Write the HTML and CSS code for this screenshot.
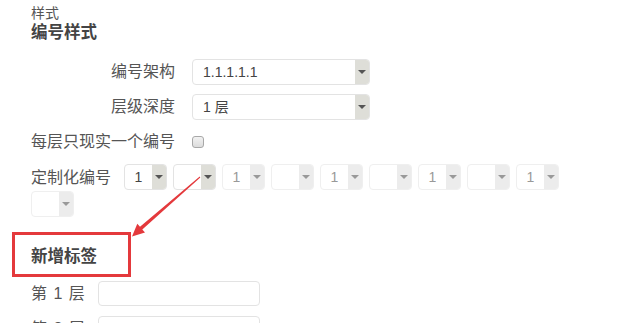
FILE: index.html
```html
<!DOCTYPE html>
<html lang="zh">
<head>
<meta charset="utf-8">
<link rel="stylesheet" href="styles.css">
</head>
<body>
<div class="page">
  <div class="crumb">样式</div>
  <h2 class="title">编号样式</h2>

  <div class="form">
    <label class="lbl">编号架构</label>
    <div class="sel wide"><span class="val">1.1.1.1.1</span><span class="btn"><i class="caret"></i></span></div>

    <label class="lbl">层级深度</label>
    <div class="sel wide"><span class="val">1 层</span><span class="btn"><i class="caret"></i></span></div>

    <label class="lbl left">每层只现实一个编号</label>
    <div class="cbwrap"><input type="checkbox" class="cb"></div>
  </div>

  <div class="custom">
    <span class="clabel">定制化编号</span>
    <div class="sel small"><span class="val c">1</span><span class="btn"><i class="caret"></i></span></div>
    <div class="sel small"><span class="val c"></span><span class="btn"><i class="caret"></i></span></div>
    <div class="sel small off"><span class="val c">1</span><span class="btn"><i class="caret"></i></span></div>
    <div class="sel small off"><span class="val c"></span><span class="btn"><i class="caret"></i></span></div>
    <div class="sel small off"><span class="val c">1</span><span class="btn"><i class="caret"></i></span></div>
    <div class="sel small off"><span class="val c"></span><span class="btn"><i class="caret"></i></span></div>
    <div class="sel small off"><span class="val c">1</span><span class="btn"><i class="caret"></i></span></div>
    <div class="sel small off"><span class="val c"></span><span class="btn"><i class="caret"></i></span></div>
    <div class="sel small off"><span class="val c">1</span><span class="btn"><i class="caret"></i></span></div>
    <div class="sel small off"><span class="val c"></span><span class="btn"><i class="caret"></i></span></div>
  </div>

  <h2 class="title tags">新增标签</h2>

  <div class="layers">
    <label class="llbl">第 1 层</label><input class="txt" type="text">
    <label class="llbl">第 2 层</label><input class="txt" type="text">
  </div>
</div>

<svg class="annot" width="627" height="323" viewBox="0 0 627 323">
  <rect x="13.5" y="233.5" width="116" height="42" fill="none" stroke="#e4393c" stroke-width="3"/>
  <polygon fill="#e4393c" points="200.3,177.4 142.3,229.4 145,232.5 132,236.5 137.3,223.8 140,226.8 199.7,176.6"/>
</svg>
</body>
</html>
```

FILE: styles.css
```css
html, body {
  margin: 0;
  padding: 0;
  background: #ffffff;
}
body {
  font-family: "Liberation Sans", "Noto Sans CJK SC", sans-serif;
  color: #555;
  width: 627px;
  height: 323px;
  overflow: hidden;
  position: relative;
}
.page {
  padding: 4px 0 0 31px;
}
.crumb {
  font-size: 14px;
  line-height: 18px;
  color: #555;
}
.title {
  margin: 0;
  font-size: 16.5px;
  line-height: 20px;
  font-weight: bold;
  color: #444;
}
.form {
  margin-top: 17px;
  display: grid;
  grid-template-columns: 144px 178px;
  column-gap: 17px;
  row-gap: 9px;
  align-items: center;
}
.lbl {
  font-size: 16px;
  line-height: 26px;
  text-align: right;
  color: #555;
  white-space: nowrap;
}
.lbl.left {
  text-align: left;
}
.sel {
  display: flex;
  height: 26px;
  box-sizing: border-box;
  border: 1px solid #e3e3e3;
  border-radius: 4px;
  background: #fff;
  overflow: hidden;
}
.sel .val {
  flex: 1;
  font-size: 14px;
  line-height: 24px;
  color: #444;
  padding-left: 10px;
  white-space: nowrap;
}
.sel .val.c {
  padding-left: 0;
  text-align: center;
}
.sel .btn {
  width: 14px;
  background: #deded8;
  display: flex;
  align-items: center;
  justify-content: center;
}
.caret {
  display: block;
  width: 0;
  height: 0;
  border-left: 4px solid transparent;
  border-right: 4px solid transparent;
  border-top: 4px solid #555;
}
.sel.small {
  width: 43px;
  margin-right: 6px;
  margin-bottom: 1px;
}
.sel.off {
  border-color: #efefef;
}
.sel.off .val {
  color: #999;
}
.sel.off .btn {
  background: #ececec;
}
.sel.off .caret {
  border-top-color: #999;
}
.cbwrap {
  height: 26px;
  display: flex;
  align-items: center;
}
.cb {
  -webkit-appearance: none;
  appearance: none;
  margin: 0;
  width: 12px;
  height: 12px;
  border: 1px solid #a8a8a8;
  border-radius: 3px;
  background: linear-gradient(#f2f2f2, #dcdcdc);
  box-sizing: border-box;
}
.custom {
  margin-top: 9px;
  width: 560px;
  display: flex;
  flex-wrap: wrap;
  align-items: center;
}
.clabel {
  font-size: 16px;
  line-height: 26px;
  margin-right: 13px;
  color: #555;
  white-space: nowrap;
}
.tags {
  margin-top: 28px;
}
.layers {
  margin-top: 15px;
  display: grid;
  grid-template-columns: 67px 162px;
  row-gap: 10px;
  align-items: center;
}
.llbl {
  font-size: 16px;
  line-height: 25px;
  color: #555;
  white-space: nowrap;
  word-spacing: 2px;
}
.txt {
  width: 162px;
  height: 25px;
  box-sizing: border-box;
  border: 1px solid #e3e3e3;
  border-radius: 4px;
  margin: 0;
  padding: 0 6px;
  background: #fff;
}
.annot {
  position: absolute;
  left: 0;
  top: 0;
  pointer-events: none;
}
```
